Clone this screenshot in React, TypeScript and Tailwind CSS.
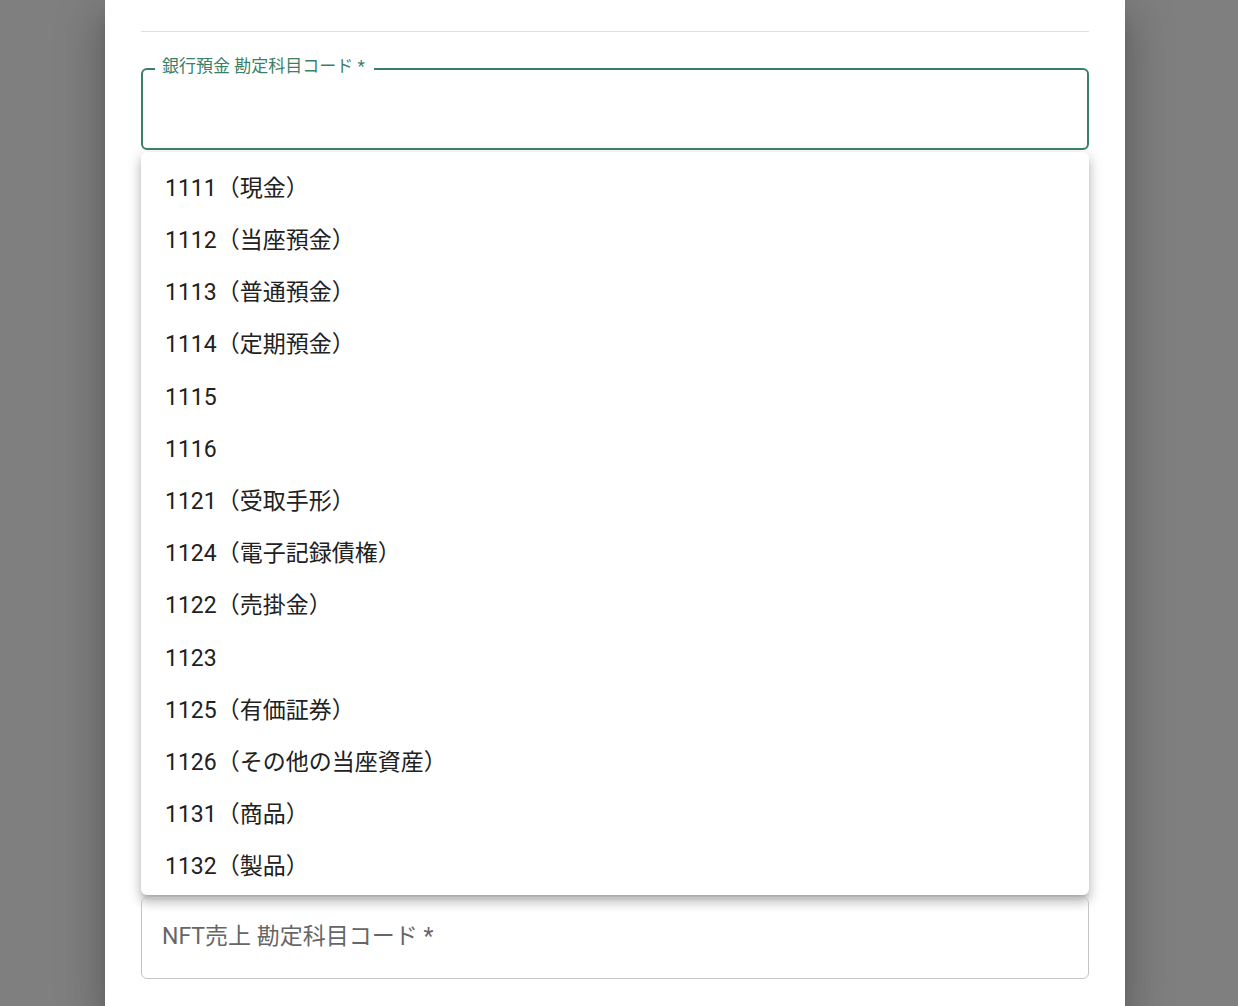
const options = [
  "1111（現金）",
  "1112（当座預金）",
  "1113（普通預金）",
  "1114（定期預金）",
  "1115",
  "1116",
  "1121（受取手形）",
  "1124（電子記録債権）",
  "1122（売掛金）",
  "1123",
  "1125（有価証券）",
  "1126（その他の当座資産）",
  "1131（商品）",
  "1132（製品）",
];

const font = "font-['Roboto','Noto_Sans_CJK_JP',sans-serif]";

export default function App() {
  return (
    <div className={`h-[1006px] w-full overflow-hidden bg-[#7f7f7f] flex ${font}`}>
      <div className="ml-[105px] w-[1020px] h-full bg-white px-[36px] shadow-[0_11px_15px_-7px_rgba(0,0,0,0.2),0_24px_38px_3px_rgba(0,0,0,0.14),0_9px_46px_8px_rgba(0,0,0,0.12)]">
        {/* divider */}
        <div className="mt-[31px] border-t border-[#e0e0e0]" />

        {/* focused select */}
        <div className="relative mt-[36px] h-[82px] rounded-[6px] border-2 border-[#3b7f6a]">
          <span className="absolute -top-[16px] left-[12px] bg-white pl-[7px] pr-[9px] text-[17px] leading-[24px] text-[#3b7f6a]">
            銀行預金 勘定科目コード *
          </span>
        </div>

        {/* options popover */}
        <div className="mt-[2px] h-[743px] overflow-hidden rounded-[6px] bg-white pt-[11px] shadow-[0_5px_5px_-3px_rgba(0,0,0,0.2),0_8px_10px_1px_rgba(0,0,0,0.14),0_3px_14px_2px_rgba(0,0,0,0.12)]">
          <ul>
            {options.map((o) => (
              <li
                key={o}
                className="flex h-[52.2px] items-center px-[24px] text-[23px] text-[#212121]"
              >
                {o}
              </li>
            ))}
          </ul>
        </div>

        {/* next field */}
        <div className="mt-[2px] flex h-[82px] items-center rounded-[6px] border border-[#c4c4c4] px-[20px] pb-[2px]">
          <span className="text-[23px] text-[#666666]">NFT売上 勘定科目コード *</span>
        </div>
      </div>
    </div>
  );
}
